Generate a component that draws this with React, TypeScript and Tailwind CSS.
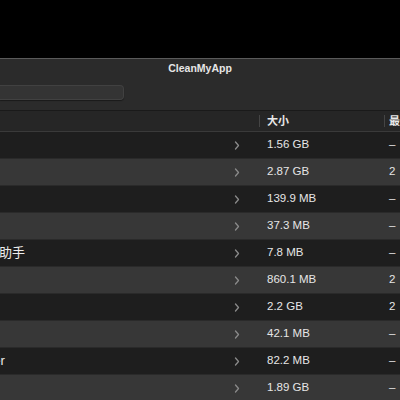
const rows = [
  { name: '', size: '1.56 GB', last: '–' },
  { name: '', size: '2.87 GB', last: '2' },
  { name: '', size: '139.9 MB', last: '–' },
  { name: '', size: '37.3 MB', last: '–' },
  { name: '微信小助手', size: '7.8 MB', last: '–' },
  { name: '', size: '860.1 MB', last: '2' },
  { name: '', size: '2.2 GB', last: '2' },
  { name: '', size: '42.1 MB', last: '–' },
  { name: 'Blender', size: '82.2 MB', last: '–' },
  { name: '', size: '1.89 GB', last: '–' },
];

function Chevron() {
  return (
    <svg width="6" height="9" viewBox="0 0 6 9" fill="none">
      <path d="M1.5 1 L4.5 4.5 L1.5 8" stroke="#8a8a8a" strokeWidth="1.3" strokeLinecap="round" strokeLinejoin="round" />
    </svg>
  );
}

export default function App() {
  return (
    <div
      className="w-[400px] h-[400px] overflow-hidden bg-black flex flex-col"
      style={{ fontFamily: '"Liberation Sans", "Noto Sans CJK SC", sans-serif' }}
    >
      <div className="h-[58px] shrink-0 bg-black" />

      {/* Window */}
      <div className="flex-1 flex flex-col border-t border-[#5a5a5a] bg-[#1e1e1e]">
        {/* Title bar */}
        <div className="h-[51px] shrink-0 bg-[#2b2b2b] flex flex-col">
          <div className="h-[19px] flex items-center justify-center text-[10.5px] font-bold text-[#e6e6e6]">
            CleanMyApp
          </div>
          <div className="mt-[7px] h-[15px] w-[124px] rounded-r-[4px] bg-[#343434] border border-[#414141] border-l-0 shadow-[0_1px_1px_rgba(0,0,0,0.4)]" />
        </div>

        {/* Header */}
        <div className="h-[22px] shrink-0 flex items-center bg-[#262626] border-t border-[#1a1a1a] border-b border-b-[#3a3a3a]">
          <div className="w-[259px] shrink-0" />
          <div className="w-[125px] shrink-0 flex items-center h-[12px] border-l border-[#454545] pl-[7px] text-[11px] font-bold text-[#e8e8e8]">
            大小
          </div>
          <div className="flex-1 flex items-center h-[12px] border-l border-[#454545] pl-[4px] text-[11px] font-bold text-[#e8e8e8] whitespace-nowrap">
            最
          </div>
        </div>

        {/* Rows */}
        <div className="flex flex-col">
          {rows.map((r, i) => (
            <div
              key={i}
              className={`h-[27px] shrink-0 flex items-center ${i % 2 === 0 ? 'bg-[#1e1e1e]' : 'bg-[#373737]'} border-b border-[#2a2a2a]`}
            >
              <div className="w-[259px] shrink-0 flex items-center overflow-hidden">
                <div className="ml-[-40px] flex-1 text-[13px] text-[#ececec] whitespace-nowrap">{r.name}</div>
                <div className="w-[25px] shrink-0 flex items-center">
                  <Chevron />
                </div>
              </div>
              <div className="w-[125px] shrink-0 pl-[8px] text-[11.5px] text-[#e6e6e6] whitespace-nowrap">{r.size}</div>
              <div className="flex-1 pl-[5px] text-[11.5px] text-[#e6e6e6] whitespace-nowrap">{r.last}</div>
            </div>
          ))}
        </div>
      </div>
    </div>
  );
}
